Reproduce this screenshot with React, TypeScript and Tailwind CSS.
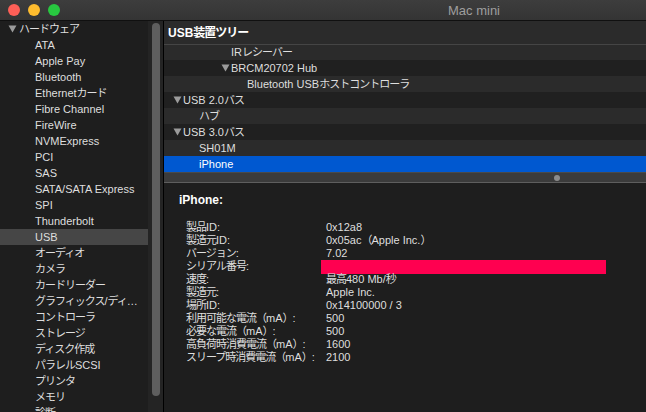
import React from 'react';

const font = "font-['Liberation_Sans','Noto_Sans_CJK_JP',sans-serif]";

const sidebarItems = [
  'ATA',
  'Apple Pay',
  'Bluetooth',
  'Ethernetカード',
  'Fibre Channel',
  'FireWire',
  'NVMExpress',
  'PCI',
  'SAS',
  'SATA/SATA Express',
  'SPI',
  'Thunderbolt',
  'USB',
  'オーディオ',
  'カメラ',
  'カードリーダー',
  'グラフィックス/ディ…',
  'コントローラ',
  'ストレージ',
  'ディスク作成',
  'パラレルSCSI',
  'プリンタ',
  'メモリ',
  '診断',
];

interface TreeRow {
  label: string;
  level: number;
  open?: boolean;
  height?: number;
}

const treeRows: TreeRow[] = [
  { label: 'IRレシーバー', level: 3, height: 15 },
  { label: 'BRCM20702 Hub', level: 3, open: true },
  { label: 'Bluetooth USBホストコントローラ', level: 4 },
  { label: 'USB 2.0バス', level: 0, open: true },
  { label: 'ハブ', level: 1 },
  { label: 'USB 3.0バス', level: 0, open: true },
  { label: 'SH01M', level: 1 },
  { label: 'iPhone', level: 1 },
];

const details: [string, string | null][] = [
  ['製品ID:', '0x12a8'],
  ['製造元ID:', '0x05ac（Apple Inc.）'],
  ['バージョン:', '7.02'],
  ['シリアル番号:', null],
  ['速度:', '最高480 Mb/秒'],
  ['製造元:', 'Apple Inc.'],
  ['場所ID:', '0x14100000 / 3'],
  ['利用可能な電流（mA）:', '500'],
  ['必要な電流（mA）:', '500'],
  ['高負荷時消費電流（mA）:', '1600'],
  ['スリープ時消費電流（mA）:', '2100'],
];

// Japanese glyphs run a bit tighter than Noto's full-width boxes
const jp = (text: string) =>
  text.split(/([\u3000-\u30ff\u4e00-\u9fff\uff00-\uffef]+)/).map((part, i) =>
    i % 2 === 1 ? (
      <span key={i} className="tracking-[-1px]">
        {part}
      </span>
    ) : (
      part
    )
  );

const Triangle: React.FC<{ className?: string }> = ({ className }) => (
  <svg width="9" height="8" viewBox="0 0 9 8" className={className}>
    <path d="M0.5 0.5 H8.5 L4.5 7.5 Z" fill="#9b9b9b" />
  </svg>
);

const App: React.FC = () => {
  return (
    <div className={`w-[646px] h-[412px] overflow-hidden flex flex-col bg-[#1e1e1e] text-[11px] ${font}`}>
      {/* title bar */}
      <div className="h-[21px] shrink-0 flex items-center bg-gradient-to-b from-[#3d3d3d] to-[#343434] border-b border-[#101010]">
        <div className="flex gap-[8px] pl-[8px]">
          <span className="w-[12px] h-[12px] rounded-full bg-[#fe5f57]" />
          <span className="w-[12px] h-[12px] rounded-full bg-[#febc2e]" />
          <span className="w-[12px] h-[12px] rounded-full bg-[#28c840]" />
        </div>
        <span className="ml-[388px] text-[13px] text-[#9e9e9e] leading-none">Mac mini</span>
      </div>

      <div className="flex-1 flex min-h-0">
        {/* sidebar */}
        <div className="w-[148px] shrink-0 bg-[#1e1e1e] text-[#dedede]">
          <div className="h-[16px] flex items-center pl-[8px]">
            <Triangle className="mr-[2px]" />
            <span>{jp('ハードウェア')}</span>
          </div>
          {sidebarItems.map(item => (
            <div
              key={item}
              className={`h-[16px] flex items-center pl-[35px] whitespace-nowrap ${item === 'USB' ? 'bg-[#464646]' : ''}`}
            >
              {jp(item)}
            </div>
          ))}
        </div>

        {/* scrollbar */}
        <div className="w-[15px] shrink-0 bg-[#242424] pt-[2px] pb-[15px] flex justify-center">
          <div className="w-[8px] h-[373px] rounded-full bg-[#5e5e5e]" />
        </div>

        {/* right pane */}
        <div className="flex-1 flex flex-col border-l border-black text-[#dedede]">
          <div className="h-[24px] shrink-0 flex items-center pl-[4px] bg-[#2b2b2b] border-b border-[#454545] font-bold text-[12px] text-white">
            {jp('USB装置ツリー')}
          </div>
          {treeRows.map((row, i) => {
            const selected = row.label === 'iPhone';
            const bg = selected ? 'bg-[#0058d0] text-white' : i % 2 === 0 ? 'bg-[#2b2b2b]' : 'bg-[#202020]';
            return (
              <div
                key={row.label}
                className={`${row.height === 15 ? 'h-[15px]' : 'h-[16px]'} shrink-0 flex items-center whitespace-nowrap ${bg}`}
                style={{ paddingLeft: 19 + row.level * 16 - (row.open ? 10 : 0) }}
              >
                {row.open && <Triangle className="mr-[1px]" />}
                <span>{jp(row.label)}</span>
              </div>
            );
          })}

          {/* splitter */}
          <div className="h-[11px] shrink-0 bg-[#3b3b3b] border-y border-[#5e5e5e] border-t-[#4a4a4a] flex items-center">
            <span className="ml-[390px] w-[6px] h-[6px] rounded-full bg-[#8c8c8c]" />
          </div>

          {/* detail */}
          <div className="flex-1 bg-[#1e1e1e] pl-[15px] pt-[10px]">
            <div className="font-bold text-[12px] text-white h-[14px] flex items-center">iPhone:</div>
            <div className="mt-[14px] pl-[7px] grid grid-cols-[140px_1fr] auto-rows-[13px] leading-[13px] text-[#dedede]">
              {details.map(([label, value]) => (
                <React.Fragment key={label}>
                  <span className="whitespace-nowrap">{jp(label)}</span>
                  {value === null ? (
                    <span className="flex items-center">
                      <span className="block ml-[-5px] w-[285px] h-[14px] bg-[#ff0050]" />
                    </span>
                  ) : (
                    <span className="whitespace-nowrap">{jp(value)}</span>
                  )}
                </React.Fragment>
              ))}
            </div>
          </div>
        </div>
      </div>
    </div>
  );
};

export default App;
